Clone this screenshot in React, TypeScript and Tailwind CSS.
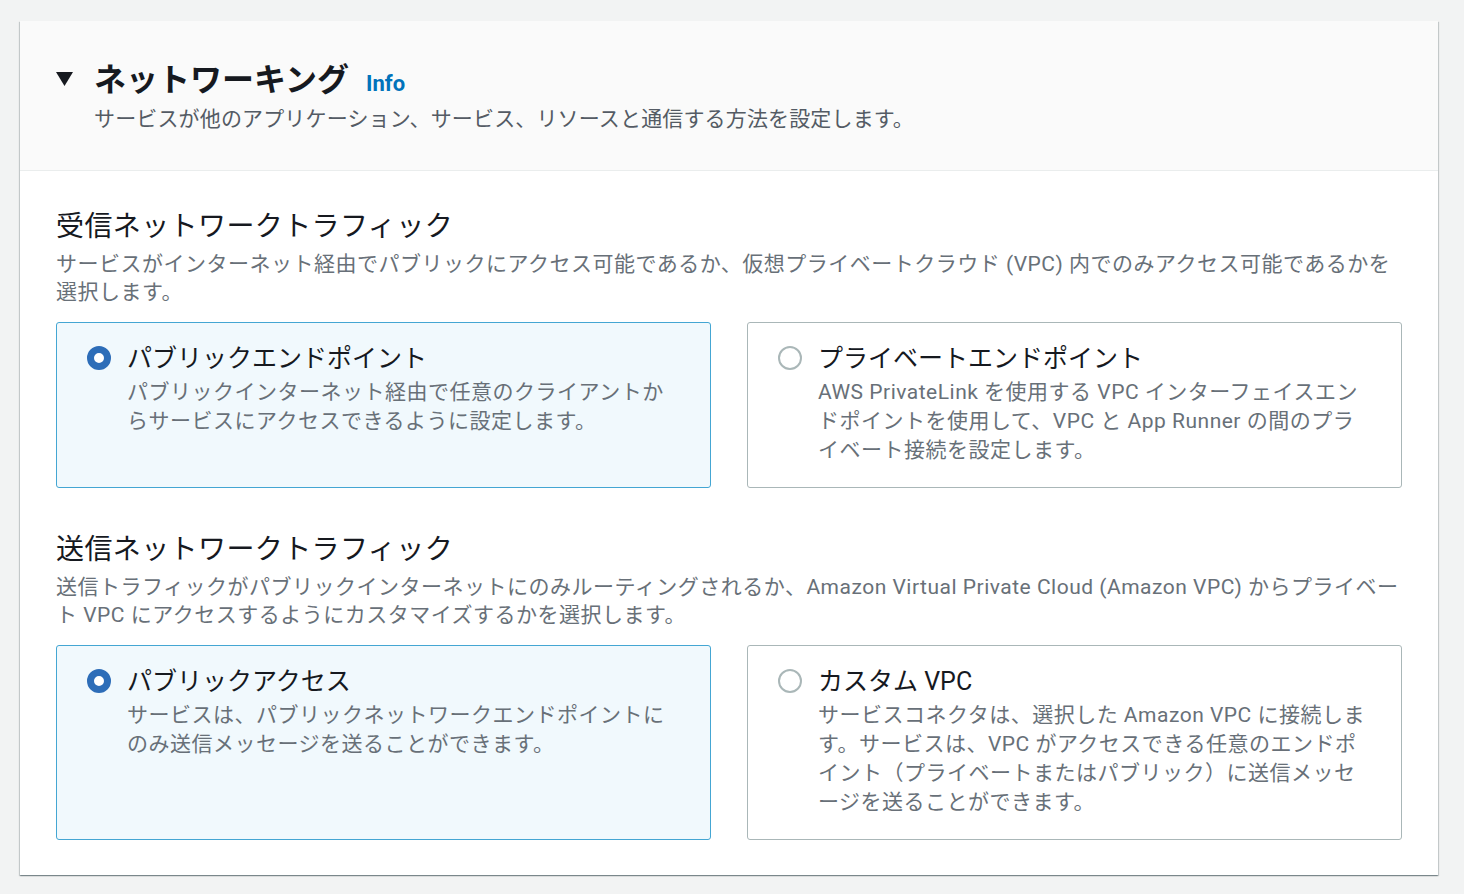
import { useState } from 'react'

const font = { fontFamily: '"Roboto", "Noto Sans CJK JP", sans-serif' }

type Option = { id: string; title: string; desc: string }

function RadioCard({ opt, checked, onSelect }: { opt: Option; checked: boolean; onSelect: () => void }) {
  return (
    <div
      onClick={onSelect}
      className={
        'flex cursor-pointer gap-4 rounded-[3px] border px-[30px] pt-[19px] pb-[22px] ' +
        (checked ? 'border-[#44a6d3] bg-[#f1f9fd]' : 'border-[#aab7b8] bg-white')
      }
    >
      <div className="pt-[4px]">
        {checked ? (
          <div className="h-[24px] w-[24px] rounded-full border-[7px] border-[#2d6db8] bg-white" />
        ) : (
          <div className="h-[24px] w-[24px] rounded-full border-2 border-[#aab7b8] bg-white" />
        )}
      </div>
      <div className="min-w-0 flex-1">
        <div className="text-[25px] leading-[33px] text-[#16191f]">{opt.title}</div>
        <p className="mt-[3px] text-[21px] leading-[29px] tracking-[0.5px] text-[#687078]">{opt.desc}</p>
      </div>
    </div>
  )
}

function Group({ title, desc, options }: { title: string; desc: string; options: Option[] }) {
  const [sel, setSel] = useState(options[0].id)
  return (
    <div>
      <h3 className="text-[28px] leading-[36px] tracking-[0.4px] text-[#16191f]">{title}</h3>
      <p className="mt-[5px] text-[21px] leading-[28px] tracking-[0.5px] text-[#687078]">{desc}</p>
      <div className="mt-[16px] grid grid-cols-2 gap-9">
        {options.map((o) => (
          <RadioCard key={o.id} opt={o} checked={sel === o.id} onSelect={() => setSel(o.id)} />
        ))}
      </div>
    </div>
  )
}

export default function App() {
  return (
    <div className="min-h-[894px] bg-[#f2f3f3] px-5 pt-[21px]" style={font}>
      <div className="w-[1418px] bg-white shadow-[0_1px_1px_0_rgba(0,28,36,0.3),1px_1px_1px_0_rgba(0,28,36,0.15),-1px_1px_1px_0_rgba(0,28,36,0.15)]">
        <div className="border-b border-[#eaeded] bg-[#fafafa] px-9 pt-[40px] pb-[37px]">
          <div className="flex items-center gap-[21px]">
            <svg width="17" height="14" viewBox="0 0 17 14" className="mt-[-4px]">
              <path d="M0 0 H17 L8.5 14 Z" fill="#16191f" />
            </svg>
            <div className="flex items-baseline gap-[17px]">
              <h2 className="text-[32px] font-bold leading-[38px] text-[#16191f]">ネットワーキング</h2>
              <a className="text-[22px] font-bold text-[#0073bb]">Info</a>
            </div>
          </div>
          <p className="mt-[5px] pl-[38px] text-[21px] leading-[28px] tracking-[0.15px] text-[#545b64]">
            サービスが他のアプリケーション、サービス、リソースと通信する方法を設定します。
          </p>
        </div>
        <div className="flex flex-col gap-[44px] px-9 pt-[38px] pb-[35px]">
          <Group
            title="受信ネットワークトラフィック"
            desc="サービスがインターネット経由でパブリックにアクセス可能であるか、仮想プライベートクラウド (VPC) 内でのみアクセス可能であるかを選択します。"
            options={[
              {
                id: 'public',
                title: 'パブリックエンドポイント',
                desc: 'パブリックインターネット経由で任意のクライアントからサービスにアクセスできるように設定します。',
              },
              {
                id: 'private',
                title: 'プライベートエンドポイント',
                desc: 'AWS PrivateLink を使用する VPC インターフェイスエンドポイントを使用して、VPC と App Runner の間のプライベート接続を設定します。',
              },
            ]}
          />
          <Group
            title="送信ネットワークトラフィック"
            desc="送信トラフィックがパブリックインターネットにのみルーティングされるか、Amazon Virtual Private Cloud (Amazon VPC) からプライベート VPC にアクセスするようにカスタマイズするかを選択します。"
            options={[
              {
                id: 'publicAccess',
                title: 'パブリックアクセス',
                desc: 'サービスは、パブリックネットワークエンドポイントにのみ送信メッセージを送ることができます。',
              },
              {
                id: 'customVpc',
                title: 'カスタム VPC',
                desc: 'サービスコネクタは、選択した Amazon VPC に接続します。サービスは、VPC がアクセスできる任意のエンドポイント（プライベートまたはパブリック）に送信メッセージを送ることができます。',
              },
            ]}
          />
        </div>
      </div>
    </div>
  )
}
